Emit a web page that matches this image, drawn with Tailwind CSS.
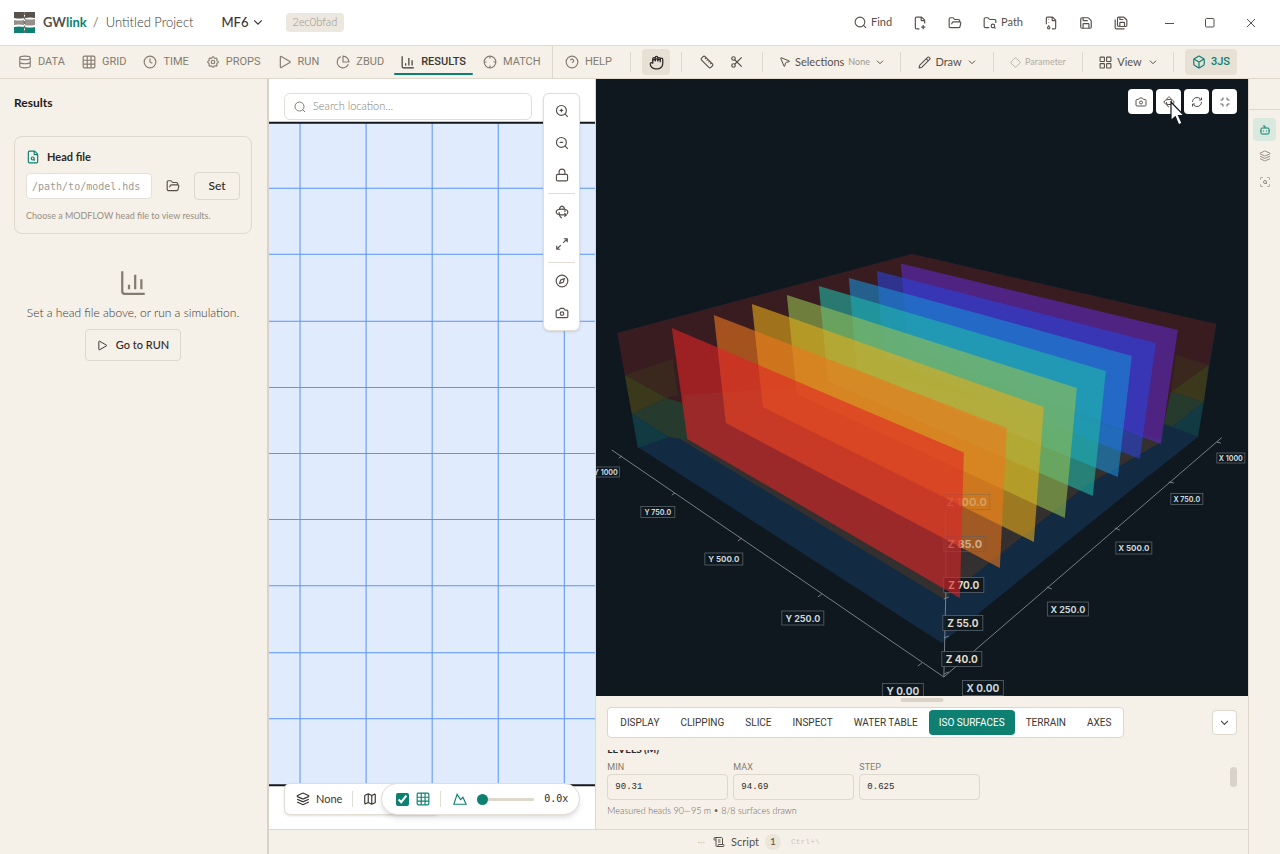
<!DOCTYPE html>
<html lang="en">
<head>
    <meta charset="UTF-8">
    <meta name="viewport" content="width=device-width, initial-scale=1.0">
    <title>GWlink - Untitled Project</title>
    <script src="https://cdn.jsdelivr.net/npm/@tailwindcss/browser@4"></script>
</head>
<body class="h-screen flex flex-col overflow-hidden bg-[#f5f0e8] text-[#57504a] font-['Lato','Open_Sans',sans-serif] text-xs">

    <!-- Icon set -->
    <svg class="hidden" xmlns="http://www.w3.org/2000/svg">
        <symbol id="i-database" viewBox="0 0 24 24"><ellipse cx="12" cy="5" rx="9" ry="3"/><path d="M3 5v14c0 1.7 4 3 9 3s9-1.300 9-3V5M3 12c0 1.700 4 3 9 3s9-1.300 9-3"/></symbol>
        <symbol id="i-grid" viewBox="0 0 24 24"><rect x="2" y="2" width="20" height="20" rx="2"/><path d="M2 9h20M2 15.500h20M9 2v20M15.500 2v20"/></symbol>
        <symbol id="i-clock" viewBox="0 0 24 24"><circle cx="12" cy="12" r="10"/><path d="M12 6v6l4 2"/></symbol>
        <symbol id="i-settings" viewBox="0 0 24 24"><path d="M10.300 4.300c.4-1.800 3-1.800 3.400 0a1.700 1.700 0 0 0 2.600 1.100c1.500-.9 3.300.8 2.400 2.400a1.700 1.700 0 0 0 1 2.500c1.800.4 1.800 3 0 3.400a1.700 1.700 0 0 0-1 2.600c.9 1.500-.9 3.300-2.400 2.400a1.700 1.700 0 0 0-2.600 1c-.4 1.800-3 1.800-3.400 0a1.700 1.700 0 0 0-2.600-1c-1.500.9-3.300-.9-2.400-2.400a1.700 1.700 0 0 0-1-2.600c-1.800-.4-1.800-3 0-3.400a1.700 1.700 0 0 0 1-2.500c-.9-1.600.9-3.300 2.400-2.400a1.700 1.700 0 0 0 2.600-1.100z"/><circle cx="12" cy="12" r="3"/></symbol>
        <symbol id="i-play" viewBox="0 0 24 24"><path d="M4 3.500v17c0 .8.8 1.300 1.500.9l15-8.500a1 1 0 0 0 0-1.800l-15-8.500A1 1 0 0 0 4 3.500z"/></symbol>
        <symbol id="i-pie" viewBox="0 0 24 24"><path d="M21.200 15.900A10 10 0 1 1 8 2.800"/><path d="M22 12A10 10 0 0 0 12 2v10z"/></symbol>
        <symbol id="i-chart" viewBox="0 0 24 24"><path d="M2 2v18a2 2 0 0 0 2 2h18"/><path d="M8 18v-4M13.500 18V5M19 18V9"/></symbol>
        <symbol id="i-crosshair" viewBox="0 0 24 24"><circle cx="12" cy="12" r="10"/><path d="M22 12h-4M6 12H2M12 6V2M12 22v-4"/></symbol>
        <symbol id="i-help" viewBox="0 0 24 24"><circle cx="12" cy="12" r="10"/><path d="M9.100 9a3 3 0 0 1 5.800 1c0 2-3 3-3 3M12 17h.010"/></symbol>
        <symbol id="i-hand" viewBox="0 0 24 24"><path d="M18 11.500V9a2 2 0 0 0-4 0v1.400M14 10V8a2 2 0 0 0-4 0v2M10 9.900V9a2 2 0 0 0-4 0v5M6 14a2 2 0 0 0-4 0a8 8 0 0 0 8 8h4a8 8 0 0 0 8-8V7a2 2 0 1 0-4 0v4.500"/><path d="M6 10V6a2 2 0 0 1 4 0v4M10 8V4a2 2 0 0 1 4 0v5M14 6a2 2 0 0 1 4 0v3"/></symbol>
        <symbol id="i-ruler" viewBox="0 0 24 24"><path d="M21.300 15.300a2.400 2.400 0 0 1 0 3.400l-2.600 2.600a2.400 2.400 0 0 1-3.400 0L2.700 8.700a2.400 2.400 0 0 1 0-3.400l2.600-2.600a2.400 2.400 0 0 1 3.400 0zM14.500 12.500l2-2M11.500 9.500l2-2M8.500 6.500l2-2M17.500 15.500l2-2"/></symbol>
        <symbol id="i-scissors" viewBox="0 0 24 24"><circle cx="6" cy="6" r="3"/><circle cx="6" cy="18" r="3"/><path d="M8.100 8.100 20 20M20 4 8.100 15.900"/></symbol>
        <symbol id="i-pointer" viewBox="0 0 24 24"><path d="M3.500 4.600a.8.8 0 0 1 1.100-1.100l16 6.500c.6.300.6 1.100 0 1.300l-6.200 1.600a2 2 0 0 0-1.400 1.400l-1.600 6.200c-.2.600-1 .6-1.300 0z"/></symbol>
        <symbol id="i-pencil" viewBox="0 0 24 24"><path d="M21.200 6.800a2.800 2.800 0 0 0-4-4L3.800 16.200a2 2 0 0 0-.5.800L2 21.400c-.1.400.2.700.6.600L7 20.700a2 2 0 0 0 .8-.5zM15 5l4 4"/></symbol>
        <symbol id="i-diamond" viewBox="0 0 24 24"><path d="M2.700 10.300a2.400 2.400 0 0 0 0 3.400l7.600 7.600a2.400 2.400 0 0 0 3.400 0l7.600-7.600a2.400 2.400 0 0 0 0-3.400l-7.600-7.600a2.400 2.400 0 0 0-3.400 0z"/></symbol>
        <symbol id="i-tiles" viewBox="0 0 24 24"><rect x="2" y="2" width="8" height="8" rx="1"/><rect x="14" y="2" width="8" height="8" rx="1"/><rect x="2" y="14" width="8" height="8" rx="1"/><rect x="14" y="14" width="8" height="8" rx="1"/></symbol>
        <symbol id="i-box" viewBox="0 0 24 24"><path d="M21 8a2 2 0 0 0-1-1.700l-7-4a2 2 0 0 0-2 0l-7 4A2 2 0 0 0 3 8v8a2 2 0 0 0 1 1.700l7 4a2 2 0 0 0 2 0l7-4a2 2 0 0 0 1-1.700zM3.300 7 12 12l8.700-5M12 22V12"/></symbol>
        <symbol id="i-search" viewBox="0 0 24 24"><circle cx="11" cy="11" r="9"/><path d="m22 22-4.500-4.500"/></symbol>
        <symbol id="i-file-plus" viewBox="0 0 24 24"><path d="M11 22H6a2 2 0 0 1-2-2V4a2 2 0 0 1 2-2h8a2.400 2.400 0 0 1 1.700.7l3.600 3.600A2.400 2.400 0 0 1 20 8v5M14 2v5a1 1 0 0 0 1 1h5M14 19h7M17.500 15.500v7"/></symbol>
        <symbol id="i-folder-open" viewBox="0 0 24 24"><path d="m6 14 1.500-2.900A2 2 0 0 1 9.200 10H20a2 2 0 0 1 1.900 2.500l-1.500 6a2 2 0 0 1-2 1.500H4a2 2 0 0 1-2-2V5a2 2 0 0 1 2-2h3.900a2 2 0 0 1 1.700.9l.8 1.200a2 2 0 0 0 1.700.9H18a2 2 0 0 1 2 2v2"/></symbol>
        <symbol id="i-folder-search" viewBox="0 0 24 24"><path d="M10.700 20H4a2 2 0 0 1-2-2V5a2 2 0 0 1 2-2h3.900a2 2 0 0 1 1.700.9l.8 1.200a2 2 0 0 0 1.700.9H20a2 2 0 0 1 2 2v4.100"/><circle cx="17" cy="17" r="3"/><path d="m21.500 21.500-2.200-2.200"/></symbol>
        <symbol id="i-archive" viewBox="0 0 24 24"><path d="M13.500 22H18a2 2 0 0 0 2-2V8a2.400 2.400 0 0 0-.7-1.700l-3.600-3.600A2.400 2.400 0 0 0 14 2H6a2 2 0 0 0-2 2v10M14 2v5a1 1 0 0 0 1 1h5M8 12v-1M8 18v-2M8 7V6"/><circle cx="8" cy="20" r="2"/></symbol>
        <symbol id="i-save" viewBox="0 0 24 24"><path d="M15.200 3a2 2 0 0 1 1.400.6l3.800 3.800a2 2 0 0 1 .6 1.400V19a2 2 0 0 1-2 2H5a2 2 0 0 1-2-2V5a2 2 0 0 1 2-2z"/><path d="M17 21v-7a1 1 0 0 0-1-1H8a1 1 0 0 0-1 1v7M7 3v4a1 1 0 0 0 1 1h7"/></symbol>
        <symbol id="i-save-all" viewBox="0 0 24 24"><path d="M10 2v3a1 1 0 0 0 1 1h5M18 18v-6a1 1 0 0 0-1-1h-6a1 1 0 0 0-1 1v6M18 22H4a2 2 0 0 1-2-2V6"/><path d="M8 18a2 2 0 0 1-2-2V4a2 2 0 0 1 2-2h8.200a2 2 0 0 1 1.400.6l3.800 3.800A2 2 0 0 1 22 7.800V16a2 2 0 0 1-2 2z"/></symbol>
        <symbol id="i-camera" viewBox="0 0 24 24"><path d="M14 4a2 2 0 0 1 1.800 1l.5 1A2 2 0 0 0 18 7h2a2 2 0 0 1 2 2v9a2 2 0 0 1-2 2H4a2 2 0 0 1-2-2V9a2 2 0 0 1 2-2h2a2 2 0 0 0 1.800-1l.4-1A2 2 0 0 1 10 4z"/><circle cx="12" cy="13" r="3"/></symbol>
        <symbol id="i-rotate" viewBox="0 0 24 24"><path d="M16.500 7.600C15.700 4.200 14 2 12 2 10 2 8.300 4.200 7.500 7.600M7 12c0 3 .7 6 2 8 .8 1.300 1.800 2 3 2"/><path d="M20.500 15.500C21.400 14.600 22 13.400 22 12c0-3-4.500-5-10-5S2 9.200 2 12c0 2.500 3.500 4.500 8 5h9M16 14l3.500 3-3.500 3"/><path d="M17 12V9"/></symbol>
        <symbol id="i-refresh" viewBox="0 0 24 24"><path d="M3 12a9 9 0 0 1 9-9 9.800 9.800 0 0 1 6.700 2.700L21 8M21 3v5h-5M21 12a9 9 0 0 1-9 9 9.800 9.800 0 0 1-6.700-2.700L3 16M8 16H3v5"/></symbol>
        <symbol id="i-shrink" viewBox="0 0 24 24"><path d="M8 3v3a2 2 0 0 1-2 2H3M21 8h-3a2 2 0 0 1-2-2V3M3 16h3a2 2 0 0 1 2 2v3M16 21v-3a2 2 0 0 1 2-2h3"/></symbol>
        <symbol id="i-bot" viewBox="0 0 24 24"><path d="M12 8V4H8"/><rect x="4" y="8" width="16" height="12" rx="2"/><path d="M2 14h2M20 14h2M15 13v2M9 13v2"/></symbol>
        <symbol id="i-layers" viewBox="0 0 24 24"><path d="M12.800 2.200a2 2 0 0 0-1.600 0L2.600 6.100a1 1 0 0 0 0 1.800l8.600 3.900a2 2 0 0 0 1.600 0l8.600-3.900a1 1 0 0 0 0-1.800zM2 12.300l9.200 4.200a2 2 0 0 0 1.600 0l9.200-4.200M2 17.300l9.200 4.200a2 2 0 0 0 1.600 0l9.200-4.200"/></symbol>
        <symbol id="i-scan" viewBox="0 0 24 24"><path d="M3 7V5a2 2 0 0 1 2-2h2M17 3h2a2 2 0 0 1 2 2v2M21 17v2a2 2 0 0 1-2 2h-2M7 21H5a2 2 0 0 1-2-2v-2"/><circle cx="12" cy="12" r="3"/><path d="m16 16-1.900-1.900"/></symbol>
        <symbol id="i-zoom-in" viewBox="0 0 24 24"><circle cx="11" cy="11" r="8.500"/><path d="m22 22-5-5M11 8v6M8 11h6"/></symbol>
        <symbol id="i-zoom-out" viewBox="0 0 24 24"><circle cx="11" cy="11" r="8.500"/><path d="m22 22-5-5M8 11h6"/></symbol>
        <symbol id="i-lock" viewBox="0 0 24 24"><rect x="2.500" y="11" width="19" height="11" rx="2"/><path d="M7 11V7a5 5 0 0 1 10 0v4"/></symbol>
        <symbol id="i-expand" viewBox="0 0 24 24"><path d="M15 3h6v6M21 3l-7 7M3 21l7-7M9 21H3v-6"/></symbol>
        <symbol id="i-compass" viewBox="0 0 24 24"><circle cx="12" cy="12" r="10"/><path d="m16.200 7.800-1.800 5.400a2 2 0 0 1-1.200 1.200l-5.400 1.800 1.800-5.400a2 2 0 0 1 1.200-1.200z"/></symbol>
        <symbol id="i-map" viewBox="0 0 24 24"><path d="M14.100 5.600a2 2 0 0 0 1.800 0l3.700-1.900A1 1 0 0 1 21 4.600v12.800a1 1 0 0 1-.6.900l-4.500 2.300a2 2 0 0 1-1.800 0l-4.200-2.200a2 2 0 0 0-1.800 0l-3.700 1.900A1 1 0 0 1 3 19.400V6.600a1 1 0 0 1 .6-.9l4.500-2.300a2 2 0 0 1 1.800 0zM15 5.800v15M9 3.200v15"/></symbol>
        <symbol id="i-mountain" viewBox="0 0 24 24"><path d="M7 4 1.500 21h21L17 9l-4 4z"/></symbol>
        <symbol id="i-scroll" viewBox="0 0 24 24"><path d="M15 12h-5M15 8h-5M19 17V5a2 2 0 0 0-2-2H4"/><path d="M8 21h12a2 2 0 0 0 2-2v-1a1 1 0 0 0-1-1H11a1 1 0 0 0-1 1v1a2 2 0 1 1-4 0V5a2 2 0 1 0-4 0v2a1 1 0 0 0 1 1h3"/></symbol>
        <symbol id="i-file-search" viewBox="0 0 24 24"><path d="M6 22a2 2 0 0 1-2-2V4a2 2 0 0 1 2-2h8a2.400 2.400 0 0 1 1.700.7l3.600 3.600A2.400 2.400 0 0 1 20 8v12a2 2 0 0 1-2 2zM14 2v5a1 1 0 0 0 1 1h5"/><circle cx="11.500" cy="14.500" r="2.500"/><path d="M13.300 16.300 15 18"/></symbol>
        <symbol id="i-chevron" viewBox="0 0 24 24"><path d="m3 8 9 9 9-9"/></symbol>
    </svg>

    <!-- Title bar -->
    <header class="h-[46px] shrink-0 flex items-center bg-white border-b border-[#dfdbd4] pl-[14px] pr-6">
        <svg class="size-[21px]" viewBox="0 0 21 21" aria-hidden="true">
            <path fill="#57524b" d="M0 0h10v6q-5 1-10 0zM11 0h10v6q-5-1-10 0z"/>
            <path fill="#97908a" d="M0 8q5 1 10 0v5q-5-1-10 0zM11 7q5 1 10 0v6q-5 1-10 0z"/>
            <path fill="#0d8072" d="M0 15q5-1 10 0v6H0zM11 15q5 1 10 0v6H11z"/>
            <path stroke="#77716a" stroke-width="1.500" stroke-dasharray="3 1.500" d="M10.500 0v21"/>
        </svg>
        <h1 class="ml-2 text-[13px] font-bold">GW<span class="text-[#0d8072]">link</span></h1>
        <span class="ml-[6px] text-[13px] text-[#8d857a]">/</span>
        <span class="ml-[7px] text-[13px] font-light text-[#3c3631]">Untitled Project</span>
        <button class="ml-7 flex items-center gap-1 text-[13px] font-medium text-[#3c3631]">MF6
            <svg class="size-[10px] fill-none stroke-current stroke-[3]"><use href="#i-chevron"/></svg>
        </button>
        <span class="ml-[23px] h-[19px] px-[7px] flex items-center rounded-sm bg-[#ece8df] text-[11px] font-light text-[#978f84]">2ec0bfad</span>

        <div class="ml-auto flex items-center text-[#57504a]">
            <button class="flex items-center gap-1 text-[11px]"><svg class="size-[13px] fill-none stroke-current stroke-2"><use href="#i-search"/></svg>Find</button>
            <button class="ml-[21px]" aria-label="New"><svg class="size-[14px] fill-none stroke-current stroke-2"><use href="#i-file-plus"/></svg></button>
            <button class="ml-[21px]" aria-label="Open"><svg class="size-[14px] fill-none stroke-current stroke-2"><use href="#i-folder-open"/></svg></button>
            <button class="ml-[21px] flex items-center gap-1 text-[11px]"><svg class="size-[14px] fill-none stroke-current stroke-2"><use href="#i-folder-search"/></svg>Path</button>
            <button class="ml-[21px]" aria-label="Archive"><svg class="size-[14px] fill-none stroke-current stroke-2"><use href="#i-archive"/></svg></button>
            <button class="ml-[21px]" aria-label="Save"><svg class="size-[14px] fill-none stroke-current stroke-2"><use href="#i-save"/></svg></button>
            <button class="ml-[21px]" aria-label="Save all"><svg class="size-[14px] fill-none stroke-current stroke-2"><use href="#i-save-all"/></svg></button>
            <button class="ml-9" aria-label="Minimize"><svg class="size-[10px] fill-none stroke-current" viewBox="0 0 10 10"><path d="M1 5.500h9"/></svg></button>
            <button class="ml-[31px]" aria-label="Maximize"><svg class="size-[10px] fill-none stroke-current" viewBox="0 0 10 10"><rect x=".5" y=".5" width="8.500" height="8.500" rx="1"/></svg></button>
            <button class="ml-[31px]" aria-label="Close"><svg class="size-[10px] fill-none stroke-current" viewBox="0 0 10 10"><path d="m1 1 8 8M9 1 1 9"/></svg></button>
        </div>
    </header>

    <!-- Toolbar -->
    <div class="h-[33px] shrink-0 flex items-center border-b border-[#ddd7cc] text-[#857c70]">
        <nav class="h-full pl-[11px] flex items-center gap-[3px] font-['Roboto',sans-serif] text-[11px]">
            <a href="#" class="h-full px-[7px] flex items-center gap-[6px]"><svg class="size-[14px] fill-none stroke-current stroke-2"><use href="#i-database"/></svg>DATA</a>
            <a href="#" class="h-full px-[7px] flex items-center gap-[6px]"><svg class="size-[14px] fill-none stroke-current stroke-2"><use href="#i-grid"/></svg>GRID</a>
            <a href="#" class="h-full px-[7px] flex items-center gap-[6px]"><svg class="size-[14px] fill-none stroke-current stroke-2"><use href="#i-clock"/></svg>TIME</a>
            <a href="#" class="h-full px-[7px] flex items-center gap-[6px]"><svg class="size-[14px] fill-none stroke-current stroke-2"><use href="#i-settings"/></svg>PROPS</a>
            <a href="#" class="h-full px-[7px] flex items-center gap-[6px]"><svg class="size-[14px] fill-none stroke-current stroke-2"><use href="#i-play"/></svg>RUN</a>
            <a href="#" class="h-full px-[7px] flex items-center gap-[6px]"><svg class="size-[14px] fill-none stroke-current stroke-2"><use href="#i-pie"/></svg>ZBUD</a>
            <a href="#" class="relative h-full px-[7px] flex items-center gap-[6px] font-medium text-[#3c3631]"><svg class="size-[14px] fill-none stroke-current stroke-2"><use href="#i-chart"/></svg>RESULTS
                <span class="absolute inset-x-0 bottom-[3px] h-0.5 rounded bg-[#0d8072]"></span></a>
            <a href="#" class="h-full px-[7px] flex items-center gap-[6px]"><svg class="size-[14px] fill-none stroke-current stroke-2"><use href="#i-crosshair"/></svg>MATCH</a>
        </nav>
        <div class="ml-auto h-full flex items-center">
            <div class="w-[78px] h-full px-3 flex items-center border-l border-[#ddd7cc]">
                <a href="#" class="flex items-center gap-[6px] font-['Roboto',sans-serif] text-[11px]"><svg class="size-[14px] fill-none stroke-current stroke-2"><use href="#i-help"/></svg>HELP</a>
            </div>
            <div class="w-[51px] h-5 flex items-center justify-center border-l border-[#ddd7cc]">
                <button class="w-7 h-[26px] flex items-center justify-center rounded bg-[#e6e0d5] text-[#2f2a26]" aria-label="Pan"><svg class="size-[15px] fill-none stroke-current stroke-2"><use href="#i-hand"/></svg></button>
            </div>
            <div class="w-[81px] h-5 flex items-center justify-center gap-4 border-l border-[#ddd7cc] text-[#57504a]">
                <button aria-label="Measure"><svg class="size-[14px] fill-none stroke-current stroke-2"><use href="#i-ruler"/></svg></button>
                <button aria-label="Cut"><svg class="size-[14px] fill-none stroke-current stroke-2"><use href="#i-scissors"/></svg></button>
            </div>
            <div class="w-[138px] h-5 flex items-center justify-center border-l border-[#ddd7cc]">
                <button class="flex items-center gap-1 text-[11px] text-[#57504a]"><svg class="size-3 fill-none stroke-current stroke-2"><use href="#i-pointer"/></svg>Selections <span class="text-[9px] text-[#a0988c]">None</span>
                    <svg class="ml-0.5 size-2 fill-none stroke-current stroke-[3]"><use href="#i-chevron"/></svg></button>
            </div>
            <div class="w-[93px] h-5 flex items-center justify-center border-l border-[#ddd7cc]">
                <button class="flex items-center gap-1 text-[11px] text-[#57504a]"><svg class="size-[13px] fill-none stroke-current stroke-2"><use href="#i-pencil"/></svg>Draw
                    <svg class="ml-0.5 size-2 fill-none stroke-current stroke-[3]"><use href="#i-chevron"/></svg></button>
            </div>
            <div class="w-[89px] h-5 flex items-center justify-center border-l border-[#ddd7cc]">
                <button class="flex items-center gap-1 text-[9px] text-[#b4aca0]"><svg class="size-[11px] fill-none stroke-current stroke-2"><use href="#i-diamond"/></svg>Parameter</button>
            </div>
            <div class="w-[91px] h-5 flex items-center justify-center border-l border-[#ddd7cc]">
                <button class="flex items-center gap-[5px] text-[11px] text-[#57504a]"><svg class="size-[13px] fill-none stroke-current stroke-2"><use href="#i-tiles"/></svg>View
                    <svg class="ml-0.5 size-2 fill-none stroke-current stroke-[3]"><use href="#i-chevron"/></svg></button>
            </div>
            <div class="w-[107px] h-5 pl-[11px] flex items-center border-l border-[#ddd7cc]">
                <button class="w-[52px] h-[26px] flex items-center justify-center gap-[5px] rounded bg-[#e6e0d5] font-['Roboto',sans-serif] text-[11px] font-medium text-[#0d8072]"><svg class="size-[14px] fill-none stroke-current stroke-2"><use href="#i-box"/></svg>3JS</button>
            </div>
        </div>
    </div>

    <main class="flex-1 min-h-0 flex">
        <!-- Results panel -->
        <aside class="w-[269px] shrink-0 border-r-2 border-[#d9d2c6] pl-[14px] pr-[15px] pt-4">
            <h2 class="text-xs leading-4 font-bold text-[#1f1b18]">Results</h2>
            <section class="mt-[25px] h-[98px] rounded-lg border border-[#dfd9ce] px-[11px] pt-3">
                <label for="headFile" class="flex items-center gap-[7px] text-[11px] leading-4 font-bold text-[#2f2a26]"><svg class="size-[14px] fill-none stroke-[#0d8072] stroke-2"><use href="#i-file-search"/></svg>Head file</label>
                <div class="mt-[7px] flex items-center">
                    <input id="headFile" type="text" placeholder="/path/to/model.hds" class="flex-1 min-w-0 h-[26px] px-[5px] rounded-sm border border-[#e6e1d8] bg-white font-['DejaVu_Sans_Mono',monospace] text-[10px] placeholder:text-[#a09a92]">
                    <button class="ml-[14px]" aria-label="Browse"><svg class="size-[14px] fill-none stroke-current stroke-2"><use href="#i-folder-open"/></svg></button>
                    <button class="ml-[14px] w-[46px] h-7 rounded border border-[#ddd7cc] text-xs font-medium text-[#2f2a26]">Set</button>
                </div>
                <p class="mt-2 text-[9px] leading-4 text-[#978f84]">Choose a MODFLOW head file to view results.</p>
            </section>
            <div class="mt-[35px] flex flex-col items-center">
                <svg class="size-[27px] fill-none stroke-[#857c70] stroke-2"><use href="#i-chart"/></svg>
                <p class="mt-[9px] text-xs leading-4 font-light text-[#3c3631]">Set a head file above, or run a simulation.</p>
                <button class="mt-2 w-24 h-8 flex items-center justify-center gap-2 rounded border border-[#ddd7cc] text-[11px] font-medium text-[#2f2a26]"><svg class="size-[11px] fill-none stroke-current stroke-2"><use href="#i-play"/></svg>Go to RUN</button>
            </div>
        </aside>

        <div class="flex-1 min-w-0 flex flex-col">
            <div class="flex-1 min-h-0 flex">
                <!-- Plan view -->
                <section class="relative w-1/3 overflow-hidden bg-white">
                    <svg class="absolute inset-0 size-full" viewBox="269 79 326 750" preserveAspectRatio="xMidYMid slice" aria-label="Model grid">
                        <rect x="200" y="123" width="460" height="662" fill="#e0ebfd"/>
                        <g stroke="#5b94f5" stroke-width="1">
                            <path d="M300 123v661M366 123v661M432 123v661M498 123v661M564 123v661"/>
                            <path d="M200 188.500h460M200 254.500h460M200 321.500h460M200 387.500h460M200 453.500h460M200 519.500h460M200 585.500h460M200 652.500h460M200 718.500h460"/>
                        </g>
                        <path stroke="#14181c" stroke-width="2" d="M200 123h460M200 785h460"/>
                    </svg>
                    <label class="absolute left-[15px] right-[63px] top-[14px] h-[27px] px-[9px] flex items-center gap-[7px] rounded-md border border-[#e2ded6] bg-white">
                        <svg class="size-3 shrink-0 fill-none stroke-[#857c70] stroke-2"><use href="#i-search"/></svg>
                        <input type="search" placeholder="Search location..." aria-label="Search location" class="w-full text-[11px] font-light outline-none placeholder:text-[#857c70]">
                    </label>
                    <div class="absolute right-[15px] top-[14px] w-[37px] py-px flex flex-col rounded-md border border-[#e2ded6] bg-white shadow-sm">
                        <button class="h-8 flex items-center justify-center" aria-label="Zoom in"><svg class="size-[14px] fill-none stroke-current stroke-2"><use href="#i-zoom-in"/></svg></button>
                        <button class="h-8 flex items-center justify-center" aria-label="Zoom out"><svg class="size-[14px] fill-none stroke-current stroke-2"><use href="#i-zoom-out"/></svg></button>
                        <button class="h-8 flex items-center justify-center" aria-label="Lock"><svg class="size-[14px] fill-none stroke-current stroke-2"><use href="#i-lock"/></svg></button>
                        <hr class="mx-1 my-0.5 border-[#e2ded6]">
                        <button class="h-8 flex items-center justify-center" aria-label="Rotate"><svg class="size-[14px] fill-none stroke-current stroke-2"><use href="#i-rotate"/></svg></button>
                        <button class="h-8 flex items-center justify-center" aria-label="Fit"><svg class="size-[14px] fill-none stroke-current stroke-2"><use href="#i-expand"/></svg></button>
                        <hr class="mx-1 my-0.5 border-[#e2ded6]">
                        <button class="h-8 flex items-center justify-center" aria-label="North"><svg class="size-[14px] fill-none stroke-current stroke-2"><use href="#i-compass"/></svg></button>
                        <button class="h-8 flex items-center justify-center" aria-label="Snapshot"><svg class="size-[14px] fill-none stroke-current stroke-2"><use href="#i-camera"/></svg></button>
                    </div>
                    <div class="absolute left-[15px] bottom-[14px] w-[156px] h-8 pl-[11px] flex items-center gap-[6px] rounded-md border border-[#e2ded6] bg-white text-[11px] text-[#3c3631] shadow-sm">
                        <svg class="size-[14px] fill-none stroke-current stroke-2"><use href="#i-layers"/></svg>None
                        <span class="ml-1 w-px h-4 bg-[#e2ded6]"></span>
                        <svg class="ml-1 size-[14px] fill-none stroke-current stroke-2"><use href="#i-map"/></svg>
                    </div>
                    <div class="absolute right-[15px] bottom-[14px] w-[199px] h-8 pl-[14px] pr-[11px] flex items-center rounded-full border border-[#e2ded6] bg-white shadow-md text-[#0d8072]">
                        <input type="checkbox" checked aria-label="Show grid" class="size-[13px] accent-[#0d8072]">
                        <svg class="ml-[7px] size-[14px] fill-none stroke-current stroke-2"><use href="#i-grid"/></svg>
                        <span class="ml-[10px] w-px h-4 bg-[#e2ded6]"></span>
                        <svg class="ml-3 size-[14px] fill-none stroke-current stroke-2"><use href="#i-mountain"/></svg>
                        <input type="range" min="0" max="5" value="0" step="0.1" aria-label="Vertical exaggeration" class="ml-[10px] w-[57px] h-[3px] appearance-none rounded bg-[#ddd7cc] [&::-webkit-slider-thumb]:appearance-none [&::-webkit-slider-thumb]:size-[11px] [&::-webkit-slider-thumb]:rounded-full [&::-webkit-slider-thumb]:bg-[#0d8072]">
                        <span class="ml-auto font-['DejaVu_Sans_Mono',monospace] text-[10px] text-[#2f2a26]">0.0x</span>
                    </div>
                </section>

                <!-- 3D view -->
                <div class="flex-1 min-w-0 flex flex-col border-l border-[#ddd7cc]">
                    <section class="relative flex-1 min-h-0 overflow-hidden bg-[#10181f]">
                        <svg class="absolute inset-0 size-full" viewBox="596 79 652 617" preserveAspectRatio="xMidYMid slice" aria-label="Iso surfaces">
                            <!-- model block -->
                            <path fill="#132a43" d="M617.500 333 912 254 1216.500 324 1198 436 942 643 638 447z"/>
                            <path fill="#391c20" d="M617.500 333 912 254 1216.500 324 1209 365 1171 395 1165 440 1087 485 944 598 686 439 667 398 625 375z"/>
                            <path fill="#33302f" d="M681 439.500 944 599 1087 485 1165 440 900 380 684 395z"/>
                            <path fill="#3a281e" d="M625 375 673 359 678 395 667 398zM1176 355 1209 365 1171 392z"/>
                            <path fill="#3a391c" d="M625 375 667 398 632 414zM1209 365 1204 402 1171 392z"/>
                            <path fill="#263a2e" d="M632 414 667 398 683 403 688 440 669 437zM1171 392 1204 402 1172 427 1164 424z"/>
                            <path fill="#113a43" d="M632 414 669 437 638 448zM1204 402 1198 437 1172 427z"/>
                            <path fill="#132a43" d="M1164 424 1172 427 1198 437 1150 475 1120 480 1140 459 1161 444z"/>
                            <!-- iso surfaces, far to near -->
                            <g fill-opacity=".6">
                                <path fill="#5e28c4" d="M901 263.500 1178 330 1161 444 908 348z"/>
                                <path fill="#2c42d7" d="M877 271 1156 343 1140 459 884 358z"/>
                                <path fill="#198cd4" d="M849 278 1132 356 1118 477 857 369z"/>
                                <path fill="#20b8a6" d="M819 286 1106 371 1093 496 828 381z"/>
                                <path fill="#95be52" d="M787 295 1077 388 1065 518 797 394z"/>
                                <path fill="#e5ac19" d="M752 304 1044 407 1034 542 763 407z"/>
                                <path fill="#ed761e" d="M714 315 1007 428 1000 568 726 423z"/>
                            </g>
                            <path fill="none" stroke="#8d98a2" stroke-width=".8" d="M612 450 944 677 1222 437.500M944 677l2-85"/>
                            <path fill="none" stroke="#8d98a2" stroke-width=".8" stroke-opacity=".4" d="M946 592v-82"/>
                            <path fill="none" stroke="#8d98a2" stroke-width=".8" d="m619 458 3-2M672 495l3-2M738 541l4-3M818 597l4-3M918 666l4-3M1217 442l4 1M1169 482l5 1M1115 528l5 2M1047 587l5 2M944 599l5-2M944 638l5-2M944 674l5-2"/>
                            <g id="zLabels"></g>
                            <path fill="#e12526" fill-opacity=".6" d="M672 328 964 452.500 960 598 687.500 439z"/>
                            <g id="xyLabels"></g>
                        </svg>
                        <div class="absolute right-[11px] top-[10px] flex gap-[3px]">
                            <button class="w-[25px] h-[25px] flex items-center justify-center rounded-sm bg-white" aria-label="Snapshot"><svg class="size-3 fill-none stroke-current stroke-2"><use href="#i-camera"/></svg></button>
                            <button class="w-[25px] h-[25px] flex items-center justify-center rounded-sm bg-white" aria-label="Rotate"><svg class="size-3 fill-none stroke-current stroke-2"><use href="#i-rotate"/></svg></button>
                            <button class="w-[25px] h-[25px] flex items-center justify-center rounded-sm bg-white" aria-label="Reset view"><svg class="size-3 fill-none stroke-current stroke-2"><use href="#i-refresh"/></svg></button>
                            <button class="w-[25px] h-[25px] flex items-center justify-center rounded-sm bg-white" aria-label="Exit full view"><svg class="size-3 fill-none stroke-current stroke-2"><use href="#i-shrink"/></svg></button>
                        </div>
                        <!-- mouse pointer -->
                        <svg class="absolute right-[63px] top-[22px] w-[15px] h-[26px]" viewBox="0 0 15 26"><path fill="#fff" stroke="#10181f" stroke-width="1.200" d="M1 1v18.500l4.300-3.800 3.300 8 3.400-1.400-3.400-7.700H14z"/></svg>
                    </section>

                    <!-- Surface settings -->
                    <section class="relative h-[133px] shrink-0 px-[11px] pt-[11px]">
                        <span class="absolute left-1/2 top-0.5 w-[43px] h-1 -translate-x-1/2 rounded bg-[#d8d2c8]"></span>
                        <div class="flex items-center justify-between">
                            <div class="h-[31px] p-0.5 flex items-center gap-px rounded border border-[#ddd7cc] bg-white font-['Roboto',sans-serif] text-[10px] text-[#3c3631]">
                                <button class="h-[25px] px-[10px]">DISPLAY</button>
                                <button class="h-[25px] px-[10px]">CLIPPING</button>
                                <button class="h-[25px] px-[10px]">SLICE</button>
                                <button class="h-[25px] px-[10px]">INSPECT</button>
                                <button class="h-[25px] px-[10px]">WATER TABLE</button>
                                <button class="h-[25px] px-[10px] rounded-sm bg-[#0d8072] text-white">ISO SURFACES</button>
                                <button class="h-[25px] px-[10px]">TERRAIN</button>
                                <button class="h-[25px] px-[10px]">AXES</button>
                            </div>
                            <button class="size-[25px] flex items-center justify-center rounded-sm border border-[#ddd7cc] bg-white" aria-label="Collapse"><svg class="size-[9px] fill-none stroke-current stroke-[3]"><use href="#i-chevron"/></svg></button>
                        </div>
                        <div class="mt-3 h-[79px] overflow-hidden flex justify-between">
                            <div>
                                <h3 class="-mt-[7px] text-[10px] leading-3 font-bold text-[#2f2a26]">LEVELS (M)</h3>
                                <div class="mt-[6px] flex gap-[5px] font-['Roboto',sans-serif] text-[9px] leading-3 text-[#857c70]">
                                    <label>MIN<input type="text" value="90.31" class="block mt-px w-[121px] h-[26px] px-[7px] rounded-sm border border-[#ddd7cc] font-['Liberation_Mono',monospace] text-[9px] text-[#2f2a26]"></label>
                                    <label>MAX<input type="text" value="94.69" class="block mt-px w-[121px] h-[26px] px-[7px] rounded-sm border border-[#ddd7cc] font-['Liberation_Mono',monospace] text-[9px] text-[#2f2a26]"></label>
                                    <label>STEP<input type="text" value="0.625" class="block mt-px w-[121px] h-[26px] px-[7px] rounded-sm border border-[#ddd7cc] font-['Liberation_Mono',monospace] text-[9px] text-[#2f2a26]"></label>
                                </div>
                                <p class="mt-[5px] text-[9px] leading-3 font-light text-[#6d655b]">Measured heads 90—95 m • 8/8 surfaces drawn</p>
                            </div>
                            <span class="mt-[17px] w-[7px] h-5 rounded bg-[#d8d2c8]"></span>
                        </div>
                    </section>
                </div>
            </div>

            <!-- Script bar -->
            <footer class="h-[25px] shrink-0 flex items-center justify-center border-t border-[#ddd7cc] text-[11px]">
                <span class="text-[10px] text-[#cfc8bc]">···</span>
                <button class="ml-2 flex items-center gap-[6px]"><svg class="size-3 fill-none stroke-current stroke-2"><use href="#i-scroll"/></svg>Script
                    <span class="w-4 h-4 flex items-center justify-center rounded-full bg-[#ebe6da] text-[10px]">1</span></button>
                <kbd class="ml-[10px] font-['Liberation_Mono',monospace] text-[8px] text-[#cfc8bc]">Ctrl+\</kbd>
            </footer>
        </div>

        <!-- Right rail -->
        <aside class="w-8 shrink-0 flex flex-col items-center border-l border-[#ddd7cc]">
            <div class="w-full h-[31px] border-b border-[#ddd7cc]"></div>
            <button class="mt-2 w-[23px] h-[23px] flex items-center justify-center rounded-sm bg-[#dae9e0] text-[#0d8072]" aria-label="Assistant"><svg class="size-3 fill-none stroke-current stroke-2"><use href="#i-bot"/></svg></button>
            <button class="mt-[3px] w-[23px] h-[23px] flex items-center justify-center text-[#978f84]" aria-label="Layers"><svg class="size-3 fill-none stroke-current stroke-2"><use href="#i-layers"/></svg></button>
            <button class="mt-[3px] w-[23px] h-[23px] flex items-center justify-center text-[#978f84]" aria-label="Inspect"><svg class="size-3 fill-none stroke-current stroke-2"><use href="#i-scan"/></svg></button>
        </aside>
    </main>

    <script>
        // Axis labels: box centre, box size, font size
        const xyLabels = [
            { text: 'Y 1000', x: 606, y: 472, w: 27, h: 10, size: 7 },
            { text: 'Y 750.0', x: 658, y: 512, w: 34, h: 11, size: 7 },
            { text: 'Y 500.0', x: 724, y: 559, w: 38, h: 12, size: 8 },
            { text: 'Y 250.0', x: 803, y: 618, w: 42, h: 14, size: 9 },
            { text: 'Y 0.00', x: 903, y: 691, w: 41, h: 15, size: 10 },
            { text: 'X 0.00', x: 983, y: 688, w: 41, h: 15, size: 10 },
            { text: 'X 250.0', x: 1068, y: 609, w: 41, h: 14, size: 9 },
            { text: 'X 500.0', x: 1134, y: 548, w: 36, h: 12, size: 8 },
            { text: 'X 750.0', x: 1187, y: 499, w: 32, h: 11, size: 7 },
            { text: 'X 1000', x: 1231, y: 458, w: 28, h: 10, size: 7 }
        ];
        const zLabels = [
            { text: 'Z 40.0', x: 962, y: 659, w: 40, h: 15, size: 10 },
            { text: 'Z 55.0', x: 963, y: 623, w: 40, h: 15, size: 10 },
            { text: 'Z 70.0', x: 964, y: 585, w: 40, h: 15, size: 10 },
            { text: 'Z 85.0', x: 965, y: 544, w: 42, h: 15, size: 11, opacity: 0.65 },
            { text: 'Z 100.0', x: 967, y: 502, w: 46, h: 15, size: 11, opacity: 0.4 }
        ];

        function drawLabels(id, labels, color) {
            document.getElementById(id).innerHTML = labels.map(l => `
                <g opacity="${l.opacity || 1}">
                    <rect x="${l.x - l.w / 2}" y="${l.y - l.h / 2}" width="${l.w}" height="${l.h}" fill="#10181f" fill-opacity="${l.opacity ? 0 : 0.9}" stroke="#59636b" stroke-width=".8"/>
                    <text x="${l.x}" y="${l.y}" dominant-baseline="central" text-anchor="middle" font-family="Inter, sans-serif" font-weight="700" font-size="${l.size}" fill="${color}">${l.text}</text>
                </g>
            `).join('');
        }

        drawLabels('xyLabels', xyLabels, '#c9d6da');
        drawLabels('zLabels', zLabels, '#e0dac6');
    </script>
</body>
</html>
